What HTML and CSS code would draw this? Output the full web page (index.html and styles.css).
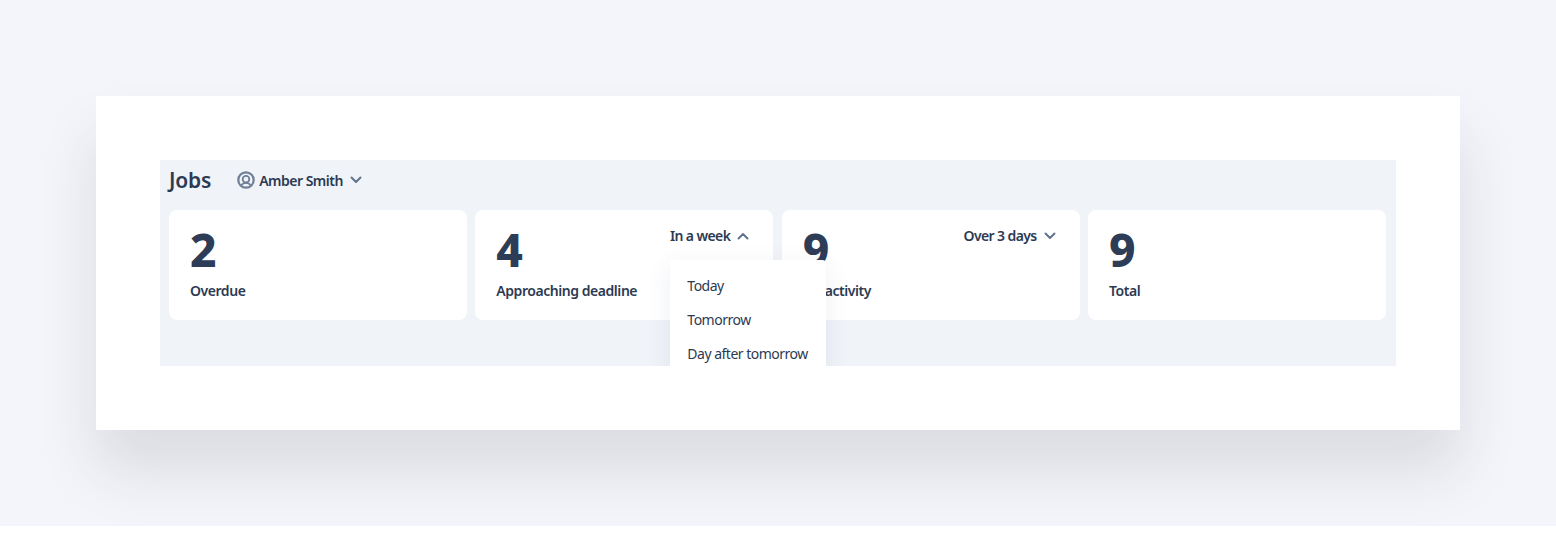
FILE: index.html
```html
<!DOCTYPE html>
<html lang="en">
<head>
<meta charset="utf-8">
<title>Jobs</title>
<link rel="stylesheet" href="styles.css">
</head>
<body>
<div class="stage">
  <div class="sheet">
    <section class="panel">
      <header class="panel-head">
        <h1 class="title">Jobs</h1>
        <div class="user">
          <svg class="user-icon" viewBox="0 0 18 18" width="18" height="18" fill="none" stroke="#6f7f96">
            <circle cx="9" cy="9" r="7.700" stroke-width="2.200"/>
            <circle cx="9" cy="8.200" r="3.300" stroke-width="1.800"/>
            <path d="M4.400 14.400c1-1.800 2.600-2.600 4.600-2.600s3.600 .8 4.600 2.600" stroke-width="1.800"/>
          </svg>
          <span class="user-name">Amber Smith</span>
          <svg class="chev" viewBox="0 0 12 8" width="12" height="8"><path d="M1.500 1.500 6 6l4.500-4.500"/></svg>
        </div>
      </header>
      <div class="cards">
        <article class="card">
          <div class="num">2</div>
          <div class="label">Overdue</div>
        </article>
        <article class="card">
          <div class="num">4</div>
          <div class="label">Approaching deadline</div>
          <div class="filter">
            <span>In a week</span>
            <svg class="chev" viewBox="0 0 12 8" width="12" height="8"><path d="M1.500 6.500 6 2l4.500 4.500"/></svg>
          </div>
          <ul class="menu">
            <li>Today</li>
            <li>Tomorrow</li>
            <li>Day after tomorrow</li>
          </ul>
        </article>
        <article class="card">
          <div class="num">9</div>
          <div class="label">No activity</div>
          <div class="filter">
            <span>Over 3 days</span>
            <svg class="chev" viewBox="0 0 12 8" width="12" height="8"><path d="M1.500 1.500 6 6l4.500-4.500"/></svg>
          </div>
        </article>
        <article class="card">
          <div class="num">9</div>
          <div class="label">Total</div>
        </article>
      </div>
    </section>
  </div>
</div>
</body>
</html>
```
FILE: styles.css
```css
* { box-sizing: border-box; }
html, body { margin: 0; padding: 0; background: #fff; }
body {
  font-family: "Noto Sans", "Open Sans", "Liberation Sans", sans-serif;
  color: #2c3a52;
}
.stage {
  height: 526px;
  padding: 96px;
  background: #f3f5fa;
  overflow: hidden;
}
.sheet {
  height: 334px;
  padding: 64px;
  background: #fff;
  box-shadow: 0 40px 56px rgba(40, 40, 50, .12);
}
.panel {
  height: 206px;
  padding: 0 10px 0 9px;
  background: #f0f3f8;
  overflow: hidden;
}
.panel-head {
  display: flex;
  align-items: center;
  height: 40px;
  margin-bottom: 10px;
}
.title {
  margin: 0 26px 0 0;
  font-size: 21px;
  line-height: 40px;
  font-weight: 600;
  letter-spacing: -.2px;
  color: #2c3a52;
}
.user { display: flex; align-items: center; }
.user-icon { margin-right: 4px; }
.user-name {
  font-size: 14px;
  font-weight: 600;
  letter-spacing: -.5px;
}
.chev { fill: none; stroke: #62748d; stroke-width: 2; stroke-linecap: round; stroke-linejoin: round; }
.user .chev { margin-left: 7px; }
.cards {
  display: grid;
  grid-template-columns: repeat(4, 1fr);
  gap: 8.330px;
}
.card {
  position: relative;
  height: 110px;
  padding: 13px 21px 0;
  background: #fff;
  border-radius: 8px;
}
.num {
  font-size: 46px;
  line-height: 52px;
  font-weight: 800;
  color: #2e3d57;
}
.label {
  margin-top: 6px;
  font-size: 14px;
  line-height: 20px;
  font-weight: 600;
  letter-spacing: -.45px;
}
.filter {
  position: absolute;
  top: 16px;
  right: 24px;
  display: flex;
  align-items: center;
  gap: 7px;
  font-size: 14px;
  line-height: 20px;
  font-weight: 600;
  letter-spacing: -.6px;
}
.menu {
  position: absolute;
  z-index: 2;
  top: 50px;
  left: 195px;
  width: 156px;
  margin: 0;
  padding: 8px 0;
  list-style: none;
  background: #fff;
  border-radius: 4px;
  box-shadow: 0 6px 24px rgba(60, 80, 130, .09);
}
.menu li {
  padding: 0 17px;
  height: 34px;
  font-size: 14px;
  line-height: 35px;
  letter-spacing: -.5px;
  white-space: nowrap;
}
```
